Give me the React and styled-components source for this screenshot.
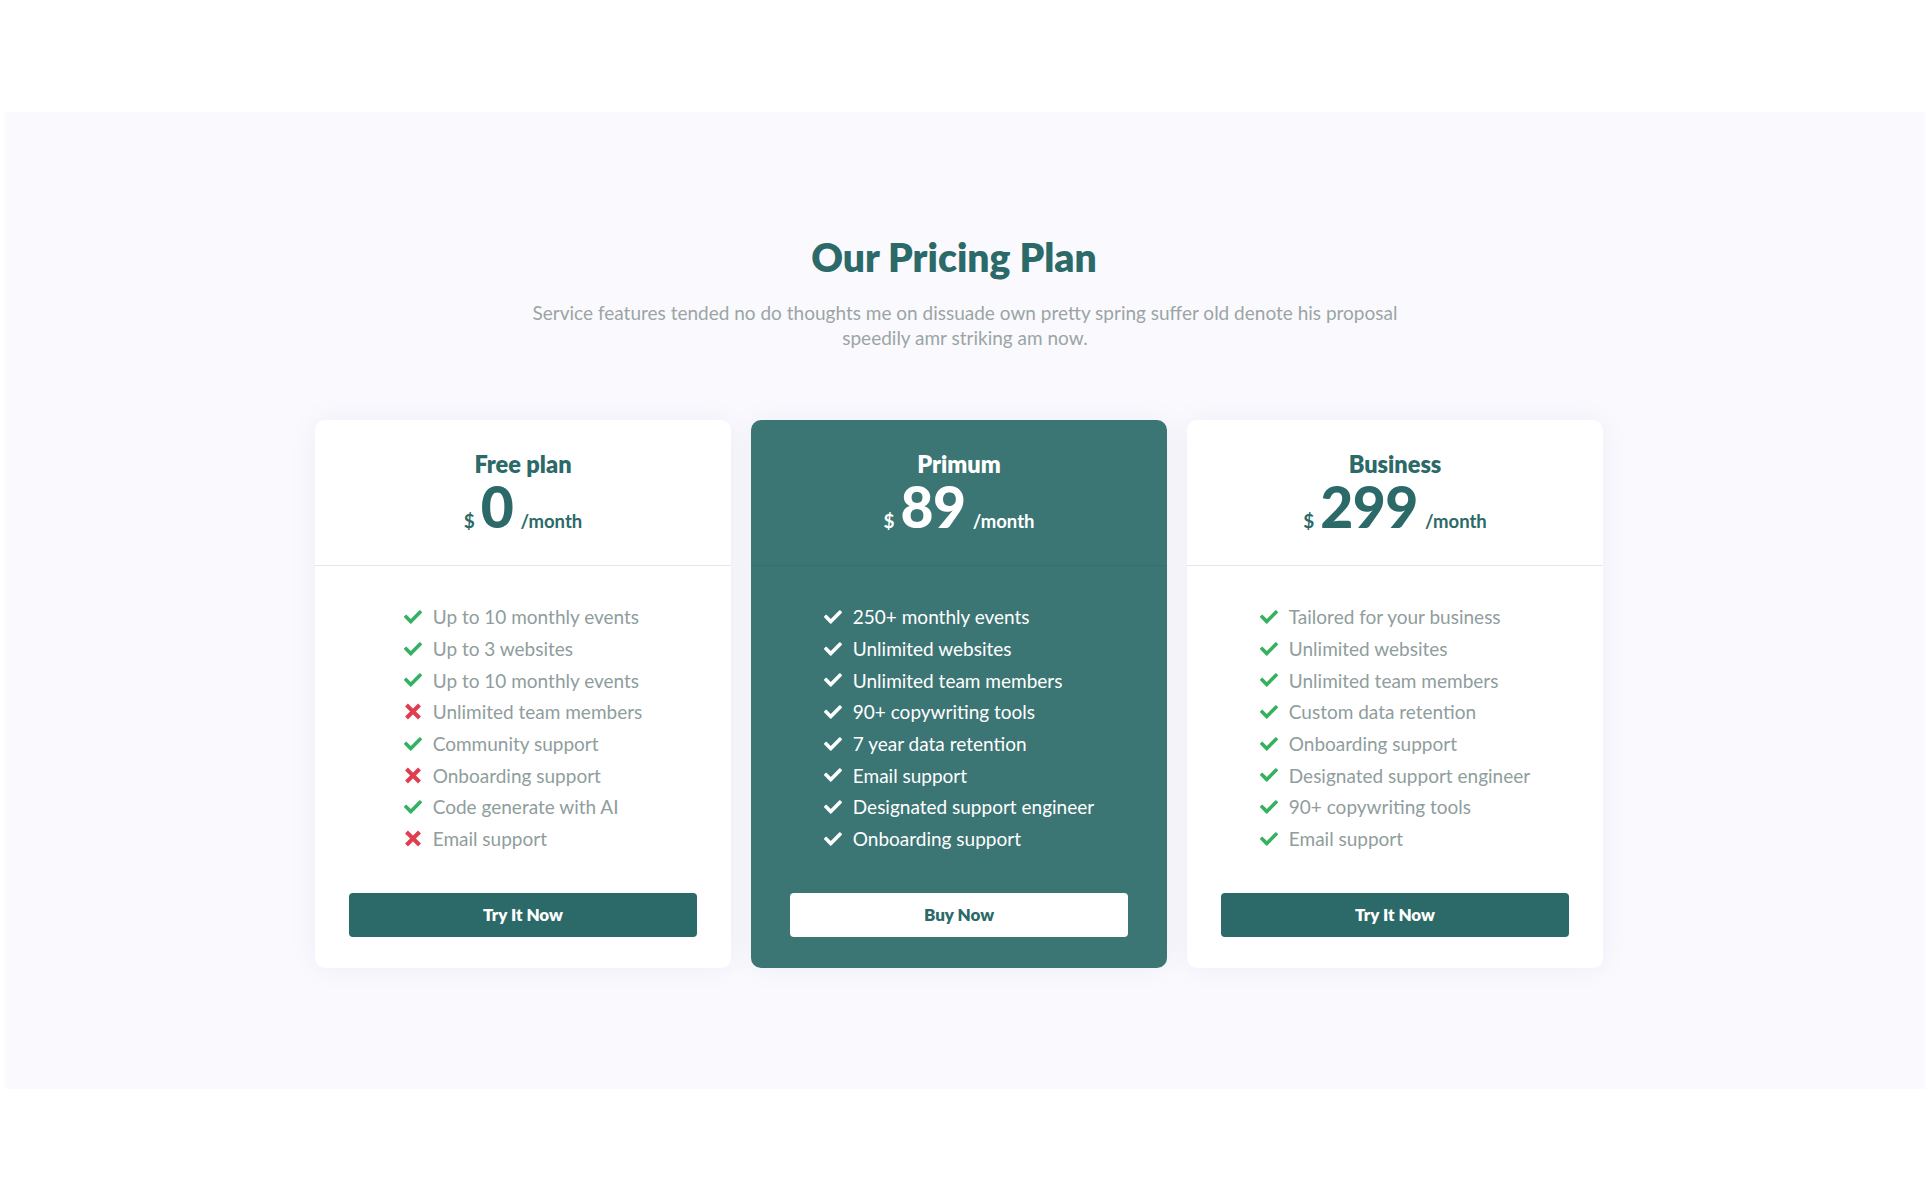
import React from "react";
import styled, { createGlobalStyle } from "styled-components";
import { FaCheck } from "react-icons/fa";

const GlobalStyle = createGlobalStyle`
  html, body { margin: 0; padding: 0; background: #ffffff; }
  body { font-family: "Lato", "Open Sans", sans-serif; -webkit-font-smoothing: antialiased; }
  * { box-sizing: border-box; }
`;

const Page = styled.div`
  padding-top: 112px;
  min-height: 1200px;
`;

const Section = styled.section`
  width: 1920px;
  margin: 0 auto;
  background: #faf9fe;
  padding: 123px 0 121px;
  display: flex;
  flex-direction: column;
  align-items: center;
`;

const Title = styled.h2`
  margin: 0 22px 20px 0;
  font-size: 39px;
  line-height: 45px;
  font-weight: 800;
  color: #2b6a68;
`;

const Subtitle = styled.p`
  margin: 0 0 70px;
  width: 900px;
  text-align: center;
  font-size: 19px;
  line-height: 25px;
  color: #9aa5a4;
`;

const Cards = styled.div`
  display: flex;
  gap: 20px;
  padding-right: 12px;
`;

const Card = styled.div`
  width: 416px;
  border-radius: 10px;
  background: ${(p) => (p.$featured ? "#3b7574" : "#ffffff")};
  box-shadow: 0 0 30px rgba(40, 40, 90, 0.05);
  display: flex;
  flex-direction: column;
  overflow: hidden;
`;

const Header = styled.div`
  padding: 31px 0 30px;
  border-bottom: 1px solid ${(p) => (p.$featured ? "#35706e" : "#e4e5e8")};
  display: flex;
  flex-direction: column;
  align-items: center;
  color: ${(p) => (p.$featured ? "#ffffff" : "#2b6a68")};
`;

const PlanName = styled.h3`
  margin: 0;
  font-size: 23.5px;
  line-height: 27px;
  font-weight: 800;
`;

const PriceRow = styled.div`
  display: flex;
  align-items: baseline;
  height: 57px;
  line-height: 1;
`;

const Currency = styled.span`
  font-size: 19px;
  font-weight: 700;
  margin-right: 6px;
`;

const Amount = styled.span`
  font-size: 57px;
  line-height: 57px;
  font-weight: 900;
  letter-spacing: -0.5px;
`;

const Period = styled.span`
  font-size: 18.5px;
  font-weight: 700;
  margin-left: 7px;
`;

const Body = styled.div`
  padding: 35px ${(p) => p.$inset}px 31px;
  display: flex;
  flex-direction: column;
  align-items: center;
`;

const List = styled.ul`
  list-style: none;
  margin: 0 0 38px;
  padding: 0;
`;

const Item = styled.li`
  display: flex;
  align-items: center;
  gap: 11px;
  height: 31.7px;
  font-size: 19px;
  color: ${(p) => (p.$featured ? "#ffffff" : "#8f9d9d")};
`;

const Icon = styled.span`
  display: flex;
  width: 18px;
  justify-content: center;
  color: ${(p) => p.$color};
`;

const Button = styled.button`
  width: 100%;
  height: 44px;
  border: none;
  border-radius: 4px;
  font-family: inherit;
  font-size: 17px;
  font-weight: 800;
  cursor: pointer;
  background: ${(p) => (p.$light ? "#ffffff" : "#2b6a68")};
  color: ${(p) => (p.$light ? "#2b6a68" : "#ffffff")};
`;

const CrossIcon = () => (
  <svg width="18" height="17" viewBox="0 0 18 17" aria-hidden="true">
    <path d="M2.5 2 L15.5 15 M15.5 2 L2.5 15" stroke="currentColor" strokeWidth="4" strokeLinecap="butt" fill="none" />
  </svg>
);

const plans = [
  {
    name: "Free plan",
    price: "0",
    button: "Try It Now",
    inset: 34,
    features: [
      ["Up to 10 monthly events", true],
      ["Up to 3 websites", true],
      ["Up to 10 monthly events", true],
      ["Unlimited team members", false],
      ["Community support", true],
      ["Onboarding support", false],
      ["Code generate with AI", true],
      ["Email support", false],
    ],
  },
  {
    name: "Primum",
    price: "89",
    button: "Buy Now",
    featured: true,
    inset: 39,
    features: [
      ["250+ monthly events", true],
      ["Unlimited websites", true],
      ["Unlimited team members", true],
      ["90+ copywriting tools", true],
      ["7 year data retention", true],
      ["Email support", true],
      ["Designated support engineer", true],
      ["Onboarding support", true],
    ],
  },
  {
    name: "Business",
    price: "299",
    button: "Try It Now",
    inset: 34,
    features: [
      ["Tailored for your business", true],
      ["Unlimited websites", true],
      ["Unlimited team members", true],
      ["Custom data retention", true],
      ["Onboarding support", true],
      ["Designated support engineer", true],
      ["90+ copywriting tools", true],
      ["Email support", true],
    ],
  },
];

export default function App() {
  return (
    <>
      <GlobalStyle />
      <Page>
        <Section>
          <Title>Our Pricing Plan</Title>
          <Subtitle>
            Service features tended no do thoughts me on dissuade own pretty spring suffer old denote his proposal
            speedily amr striking am now.
          </Subtitle>
          <Cards>
            {plans.map((p) => (
              <Card key={p.name} $featured={p.featured}>
                <Header $featured={p.featured}>
                  <PlanName>{p.name}</PlanName>
                  <PriceRow>
                    <Currency>$</Currency>
                    <Amount>{p.price}</Amount>
                    <Period>/month</Period>
                  </PriceRow>
                </Header>
                <Body $inset={p.inset}>
                  <List>
                    {p.features.map(([text, ok], i) => (
                      <Item key={i} $featured={p.featured}>
                        <Icon $color={p.featured ? "#ffffff" : ok ? "#35b25f" : "#e03e4e"}>
                          {ok ? <FaCheck size={18} /> : <CrossIcon />}
                        </Icon>
                        {text}
                      </Item>
                    ))}
                  </List>
                  <Button $light={p.featured}>{p.button}</Button>
                </Body>
              </Card>
            ))}
          </Cards>
        </Section>
      </Page>
    </>
  );
}
